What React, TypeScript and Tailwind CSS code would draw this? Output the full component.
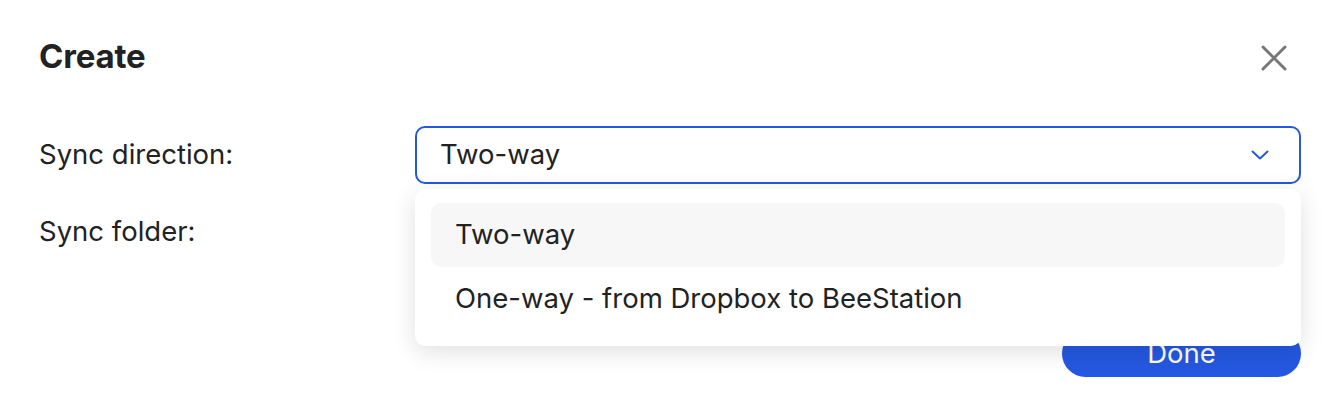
import { useState } from 'react'

const OPTIONS = ['Two-way', 'One-way - from Dropbox to BeeStation']

function CloseIcon() {
  return (
    <svg width="26" height="26" viewBox="0 0 26 26" fill="none">
      <path d="M2 2 L24 24 M24 2 L2 24" stroke="#777777" strokeWidth="3" strokeLinecap="round" />
    </svg>
  )
}

function Chevron() {
  return (
    <svg width="18" height="10" viewBox="0 0 18 10" fill="none">
      <path d="M1.5 1.5 L9 8.5 L16.5 1.5" stroke="#2458e0" strokeWidth="2" strokeLinecap="round" strokeLinejoin="round" />
    </svg>
  )
}

export default function App() {
  const [value, setValue] = useState(OPTIONS[0])
  const [open, setOpen] = useState(true)

  return (
    <div className="w-[1336px] h-[400px] bg-white text-[#222222] font-['Inter','Noto_Sans',sans-serif] overflow-hidden">
      <div className="pl-[39px] pr-[35px] pt-[36px]">
        {/* header */}
        <div className="flex items-center justify-between h-[42px]">
          <h1 className="text-[33px] font-bold tracking-[-0.2px]">Create</h1>
          <button className="mr-[14px] mt-[2px]">
            <CloseIcon />
          </button>
        </div>

        {/* form */}
        <div className="mt-[48px] flex flex-col gap-[19px]">
          <div className="flex items-center">
            <div className="w-[376px] text-[27.5px]">Sync direction:</div>
            <div className="relative flex-1">
              <button
                onClick={() => setOpen(!open)}
                className="w-full h-[58px] border-2 border-[#2458e0] rounded-[10px] flex items-center justify-between pl-[23px] pr-[30px] text-[27.5px] text-left"
              >
                <span>{value}</span>
                <Chevron />
              </button>
              {open && (
                <div className="absolute left-0 right-0 top-[63px] z-10 bg-white rounded-[10px] shadow-[0_6px_24px_rgba(0,0,0,0.12)] px-[16px] pt-[14px] pb-[15px]">
                  {OPTIONS.map((opt) => (
                    <div
                      key={opt}
                      onClick={() => {
                        setValue(opt)
                        setOpen(false)
                      }}
                      className={`h-[64px] rounded-[10px] flex items-center pl-[24px] text-[27.5px] cursor-pointer ${
                        opt === value ? 'bg-[#f7f7f7]' : ''
                      }`}
                    >
                      {opt}
                    </div>
                  ))}
                </div>
              )}
            </div>
          </div>

          <div className="flex items-center">
            <div className="w-[376px] text-[27.5px]">Sync folder:</div>
            <div className="flex-1 h-[58px] border border-[#d9d9d9] rounded-[10px]" />
          </div>
        </div>

        {/* footer */}
        <div className="mt-[69px] flex justify-end">
          <button className="w-[239px] h-[47px] rounded-full bg-[#2458e0] text-white text-[27.5px]">Done</button>
        </div>
      </div>
    </div>
  )
}
